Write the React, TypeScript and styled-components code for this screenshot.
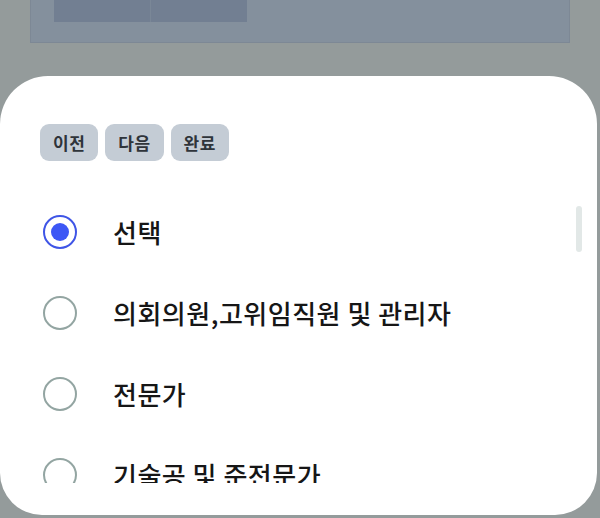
import React, { useState } from 'react';
import styled, { createGlobalStyle } from 'styled-components';

const GlobalStyle = createGlobalStyle`
  html, body {
    margin: 0;
    padding: 0;
    background: #949b9b;
    font-family: 'Noto Sans CJK KR', 'Noto Sans', sans-serif;
  }
`;

const Screen = styled.div`
  width: 600px;
  height: 518px;
  overflow: hidden;
  display: flex;
  flex-direction: column;
  background: #949b9b;
`;

const Backdrop = styled.div`
  height: 76px;
  flex-shrink: 0;
  padding: 0 30px;
`;

const DimPanel = styled.div`
  height: 43px;
  box-sizing: border-box;
  background: #84909d;
  border: 1px solid #7d8895;
  border-top: none;
  padding-left: 23px;
  display: flex;
`;

const DimCell = styled.div`
  width: 96px;
  height: 22px;
  background: #727f92;
  & + & {
    border-left: 1px solid #7a8797;
  }
`;

const Sheet = styled.div`
  position: relative;
  width: 597px;
  height: 439px;
  box-sizing: border-box;
  background: #ffffff;
  border-radius: 48px 48px 42px 42px;
  padding: 48px 0 0 40px;
  display: flex;
  flex-direction: column;
`;

const Toolbar = styled.div`
  display: flex;
  gap: 7px;
`;

const ToolButton = styled.button`
  height: 37px;
  padding: 0 13px;
  border: none;
  border-radius: 9px;
  background: #c4ccd5;
  color: #2f343a;
  font-family: inherit;
  font-size: 17px;
  font-weight: 700;
  letter-spacing: 0.5px;
  cursor: pointer;
`;

const List = styled.div`
  margin-top: 30px;
  height: 292px;
  overflow: hidden;
  display: flex;
  flex-direction: column;
`;

const Row = styled.label`
  height: 81px;
  flex-shrink: 0;
  display: flex;
  align-items: center;
  gap: 36px;
  padding-left: 3px;
  cursor: pointer;
`;

const Radio = styled.span<{ $checked: boolean }>`
  width: 34px;
  height: 34px;
  box-sizing: border-box;
  border-radius: 50%;
  border: 2px solid ${(p) => (p.$checked ? '#3f55e6' : '#93a5a2')};
  display: flex;
  align-items: center;
  justify-content: center;
  flex-shrink: 0;
  &::after {
    content: '';
    width: 18px;
    height: 18px;
    border-radius: 50%;
    background: #3d57f5;
    display: ${(p) => (p.$checked ? 'block' : 'none')};
  }
`;

const Label = styled.span`
  font-size: 26px;
  font-weight: 500;
  color: #161616;
  letter-spacing: 0.5px;
  white-space: nowrap;
`;

const ScrollThumb = styled.div`
  position: absolute;
  right: 15px;
  top: 130px;
  width: 6px;
  height: 46px;
  border-radius: 3px;
  background: #e2e8e7;
`;

const options = [
  '선택',
  '의회의원,고위임직원 및 관리자',
  '전문가',
  '기술공 및 준전문가',
];

export default function App() {
  const [selected, setSelected] = useState(0);
  return (
    <>
      <GlobalStyle />
      <Screen>
        <Backdrop>
          <DimPanel>
            <DimCell />
            <DimCell />
          </DimPanel>
        </Backdrop>
        <Sheet>
          <Toolbar>
            <ToolButton>이전</ToolButton>
            <ToolButton>다음</ToolButton>
            <ToolButton>완료</ToolButton>
          </Toolbar>
          <List>
            {options.map((o, i) => (
              <Row key={o} onClick={() => setSelected(i)}>
                <Radio $checked={selected === i} />
                <Label>{o}</Label>
              </Row>
            ))}
          </List>
          <ScrollThumb />
        </Sheet>
      </Screen>
    </>
  );
}
